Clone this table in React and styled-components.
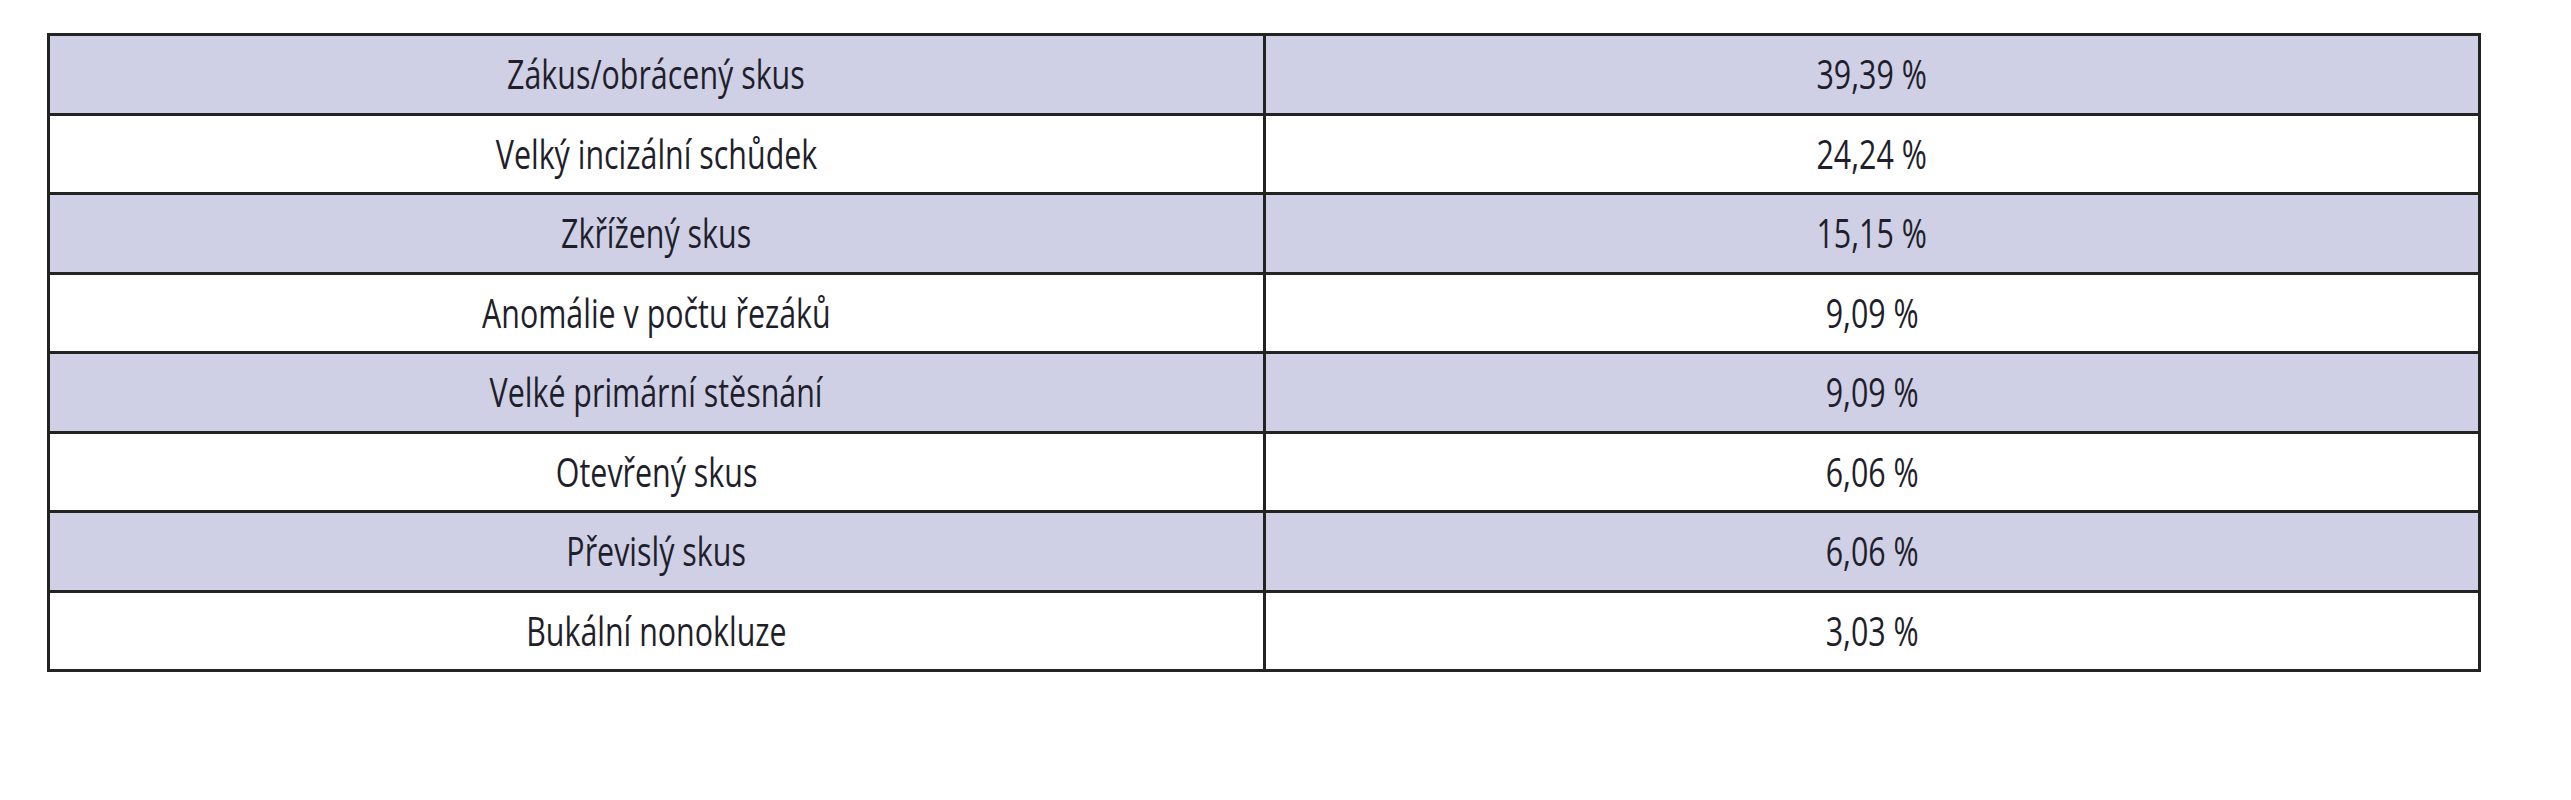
import React from "react";
import styled, { createGlobalStyle } from "styled-components";

const Global = createGlobalStyle`
  html, body { margin: 0; padding: 0; background: #ffffff; }
  body { font-family: "Open Sans", "Noto Sans", sans-serif; }
`;

const Page = styled.div`
  padding: 33px 0 0 47px;
`;

const Table = styled.table`
  width: 2434px;
  border-collapse: collapse;
  table-layout: fixed;
  border: 3px solid #232323;
`;

const Row = styled.tr`
  background: ${(p) => (p.$shaded ? "#cfd0e5" : "#ffffff")};
`;

const Cell = styled.td`
  height: 76.5px;
  padding: 0;
  border: 3px solid #232323;
  text-align: center;
  vertical-align: middle;
  width: 50%;
`;

const Label = styled.span`
  display: inline-block;
  font-family: "Open Sans", "Noto Sans", sans-serif;
  font-size: 40px;
  line-height: 1;
  color: #1f1f2b;
  transform: scaleX(0.76);
  white-space: nowrap;
`;

const data = [
  ["Zákus/obrácený skus", "39,39 %"],
  ["Velký incizální schůdek", "24,24 %"],
  ["Zkřížený skus", "15,15 %"],
  ["Anomálie v počtu řezáků", "9,09 %"],
  ["Velké primární stěsnání", "9,09 %"],
  ["Otevřený skus", "6,06 %"],
  ["Převislý skus", "6,06 %"],
  ["Bukální nonokluze", "3,03 %"],
];

export default function App() {
  return (
    <>
      <Global />
      <Page>
        <Table>
          <tbody>
            {data.map(([name, value], i) => (
              <Row key={name} $shaded={i % 2 === 0}>
                <Cell>
                  <Label>{name}</Label>
                </Cell>
                <Cell>
                  <Label>{value}</Label>
                </Cell>
              </Row>
            ))}
          </tbody>
        </Table>
      </Page>
    </>
  );
}
